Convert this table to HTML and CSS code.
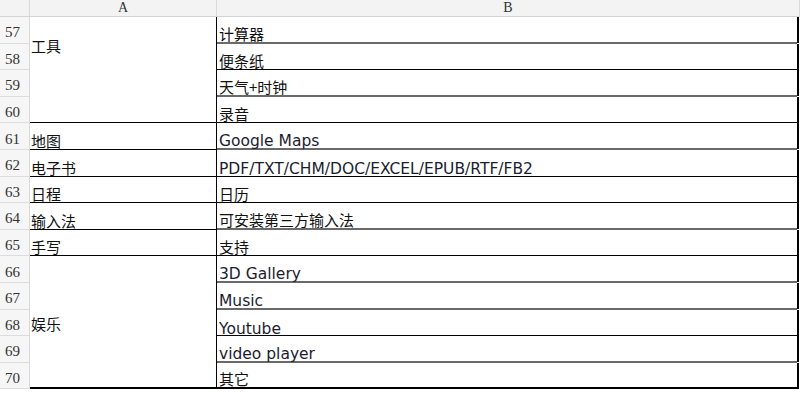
FILE: index.html
```html
<!DOCTYPE html>
<html>
<head>
<meta charset="utf-8">
<link rel="stylesheet" href="styles.css">
</head>
<body>
<div class="sheet">
  <div class="corner"></div>
  <div class="colhead">A</div>
  <div class="colhead colhead-b">B</div>

  <div class="rn" style="grid-row:2">57</div>
  <div class="rn" style="grid-row:3">58</div>
  <div class="rn" style="grid-row:4">59</div>
  <div class="rn" style="grid-row:5">60</div>
  <div class="rn" style="grid-row:6">61</div>
  <div class="rn" style="grid-row:7">62</div>
  <div class="rn" style="grid-row:8">63</div>
  <div class="rn" style="grid-row:9">64</div>
  <div class="rn" style="grid-row:10">65</div>
  <div class="rn" style="grid-row:11">66</div>
  <div class="rn" style="grid-row:12">67</div>
  <div class="rn" style="grid-row:13">68</div>
  <div class="rn" style="grid-row:14">69</div>
  <div class="rn" style="grid-row:15">70</div>

  <div class="ca ca-top" style="grid-row:2 / span 4">工具</div>
  <div class="ca" style="grid-row:6">地图</div>
  <div class="ca" style="grid-row:7">电子书</div>
  <div class="ca" style="grid-row:8">日程</div>
  <div class="ca" style="grid-row:9">输入法</div>
  <div class="ca" style="grid-row:10">手写</div>
  <div class="ca ca-mid ca-last" style="grid-row:11 / span 5">娱乐</div>

  <div class="cb gray" style="grid-row:2">计算器</div>
  <div class="cb" style="grid-row:3">便条纸</div>
  <div class="cb gray" style="grid-row:4">天气+时钟</div>
  <div class="cb" style="grid-row:5">录音</div>
  <div class="cb lat gray" style="grid-row:6">Google Maps</div>
  <div class="cb lat" style="grid-row:7">PDF/TXT/CHM/DOC/EXCEL/EPUB/RTF/FB2</div>
  <div class="cb" style="grid-row:8">日历</div>
  <div class="cb gray" style="grid-row:9">可安装第三方输入法</div>
  <div class="cb" style="grid-row:10">支持</div>
  <div class="cb lat gray" style="grid-row:11">3D Gallery</div>
  <div class="cb lat gray" style="grid-row:12">Music</div>
  <div class="cb lat" style="grid-row:13">Youtube</div>
  <div class="cb lat gray" style="grid-row:14">video player</div>
  <div class="cb last" style="grid-row:15">其它</div>
</div>
</body>
</html>
```

FILE: styles.css
```css
html, body {
  margin: 0;
  padding: 0;
  background: #ffffff;
}
.sheet {
  display: grid;
  grid-template-columns: 30px 187px 580px 3px;
  grid-template-rows: 17px repeat(14, 26.6px);
  width: 800px;
  font-family: "Noto Sans CJK SC", sans-serif;
  font-size: 15px;
  color: #111;
}
.corner {
  grid-row: 1;
  grid-column: 1;
  background: #f3f3f3;
  border-right: 1px solid #dadada;
  border-bottom: 1px solid #d4d4d4;
}
.colhead {
  grid-row: 1;
  grid-column: 2;
  background: #f3f3f3;
  border-right: 1px solid #dadada;
  border-bottom: 1px solid #d4d4d4;
  font-family: "Liberation Serif", serif;
  font-size: 14px;
  color: #333;
  display: flex;
  align-items: center;
  justify-content: center;
  line-height: 1;
}
.colhead-b {
  grid-column: 3 / span 2;
}
.rn {
  grid-column: 1;
  background: #f6f6f6;
  border-right: 1px solid #dadada;
  border-bottom: 1px solid #dcdcdc;
  font-family: "Liberation Serif", serif;
  font-size: 15px;
  color: #333;
  display: flex;
  align-items: center;
  padding-left: 5px;
  padding-top: 6px;
  box-sizing: border-box;
}
.ca {
  grid-column: 2;
  border-right: 1px solid #000;
  border-bottom: 1px solid #000;
  display: flex;
  align-items: flex-end;
  padding-left: 1px;
  padding-bottom: 1px;
  box-sizing: border-box;
  line-height: 1;
  min-height: 0;
}
.ca-top {
  align-items: flex-start;
  padding-top: 21px;
}
.ca-mid {
  align-items: center;
  padding-top: 4px;
}
.ca-last {
  border-bottom: 2px solid #000;
}
.cb {
  grid-column: 3;
  border-bottom: 1px solid #000;
  display: flex;
  align-items: flex-end;
  padding-left: 2px;
  padding-bottom: 1px;
  box-sizing: border-box;
  line-height: 1;
  min-height: 0;
  position: relative;
}
.cb::after {
  content: "";
  position: absolute;
  top: 0;
  bottom: -1px;
  right: -2px;
  width: 2px;
  background: #000;
}
.cb.gray {
  border-bottom: 2px solid #6a6a6a;
}
.cb.last {
  border-bottom: 2px solid #000;
}
.cb.last::after {
  bottom: -2px;
}
.lat {
  font-family: "DejaVu Sans", sans-serif;
  font-size: 15.5px;
  color: #1c1c30;
  line-height: 0.75;
  padding-bottom: 0;
}
```
